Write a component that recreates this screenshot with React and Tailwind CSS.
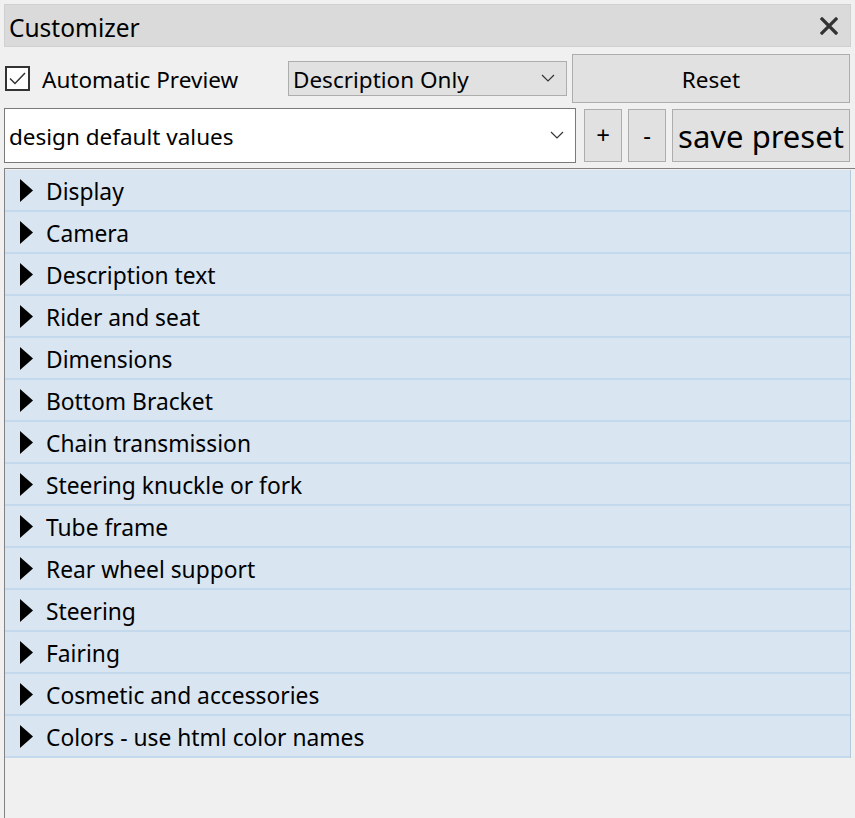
import { useState } from 'react'

const sections = [
  'Display',
  'Camera',
  'Description text',
  'Rider and seat',
  'Dimensions',
  'Bottom Bracket',
  'Chain transmission',
  'Steering knuckle or fork',
  'Tube frame',
  'Rear wheel support',
  'Steering',
  'Fairing',
  'Cosmetic and accessories',
  'Colors - use html color names',
]

function Chevron() {
  return (
    <svg width="14" height="8" viewBox="0 0 14 8" className="shrink-0">
      <path d="M1 1l6 6 6-6" fill="none" stroke="#333" strokeWidth="1.2" />
    </svg>
  )
}

function Arrow() {
  return (
    <svg width="13" height="23" viewBox="0 0 13 23" className="shrink-0">
      <path d="M0 0L13 11.5L0 23Z" fill="#000" />
    </svg>
  )
}

export default function App() {
  const [auto, setAuto] = useState(true)

  return (
    <div
      className="w-[855px] h-[818px] bg-[#f0f0f0] overflow-hidden text-black"
      style={{ fontFamily: '"Noto Sans", "Open Sans", sans-serif' }}
    >
      <div className="mx-[4px] mt-[4px] h-[43px] bg-[#dadada] border border-[#d0d0d0] flex items-center justify-between pl-[4px] pr-[12px]">
        <span className="text-[24.5px] leading-none pt-[5px]">Customizer</span>
        <svg width="18" height="18" viewBox="0 0 18 18">
          <path d="M2 2L16 16M16 2L2 16" stroke="#333" strokeWidth="3.2" strokeLinecap="square" />
        </svg>
      </div>

      <div className="flex items-center h-[56px] mt-[3px]">
        <label className="flex items-center w-[283px] pl-[5px] cursor-pointer" onClick={() => setAuto(!auto)}>
          <span className="w-[25px] h-[25px] border-2 border-[#333] bg-white flex items-center justify-center">
            {auto && (
              <svg width="17" height="13" viewBox="0 0 17 13">
                <path d="M1 6.5L6 11.5L16 1" fill="none" stroke="#333" strokeWidth="1.5" />
              </svg>
            )}
          </span>
          <span className="ml-[12px] text-[22.5px] pt-[3px]">Automatic Preview</span>
        </label>
        <div className="w-[279px] h-[35px] ml-[5px] border border-[#adadad] bg-[#e1e1e1] flex items-center justify-between pl-[4px] pr-[11px]">
          <span className="text-[22.5px] pt-[3px]">Description Only</span>
          <Chevron />
        </div>
        <button className="ml-[5px] w-[278px] h-[49px] border border-[#adadad] bg-[#e1e1e1] text-[22.5px] pt-[3px]">
          Reset
        </button>
      </div>

      <div className="flex items-center h-[56px] mt-[1px]">
        <div className="ml-[4px] w-[572px] h-[55px] border border-[#7a7a7a] bg-white flex items-center justify-between pl-[4px] pr-[11px]">
          <span className="text-[22.5px] pt-[3px]">design default values</span>
          <Chevron />
        </div>
        <button className="ml-[8px] w-[38px] h-[53px] border border-[#adadad] bg-[#e1e1e1] text-[24px]">+</button>
        <button className="ml-[6px] w-[38px] h-[53px] border border-[#adadad] bg-[#e1e1e1] text-[24px]">-</button>
        <button className="ml-[6px] w-[178px] h-[53px] border border-[#adadad] bg-[#e1e1e1] text-[31px] leading-none pt-[2px]">
          save preset
        </button>
      </div>

      <div className="mt-[5px] ml-[4px] h-[660px] border-l border-t border-[#828282] pt-[1px]">
        <div className="w-[846px] border-r border-[#b4c8dc] flex flex-col">
          {sections.map((s) => (
            <div
              key={s}
              className="h-[42px] bg-[#d9e5f1] border-b-2 border-[#c4d9ec] flex items-center pl-[15px]"
            >
              <Arrow />
              <span className="ml-[13px] text-[22.8px] pt-[4px]">{s}</span>
            </div>
          ))}
        </div>
      </div>
    </div>
  )
}
